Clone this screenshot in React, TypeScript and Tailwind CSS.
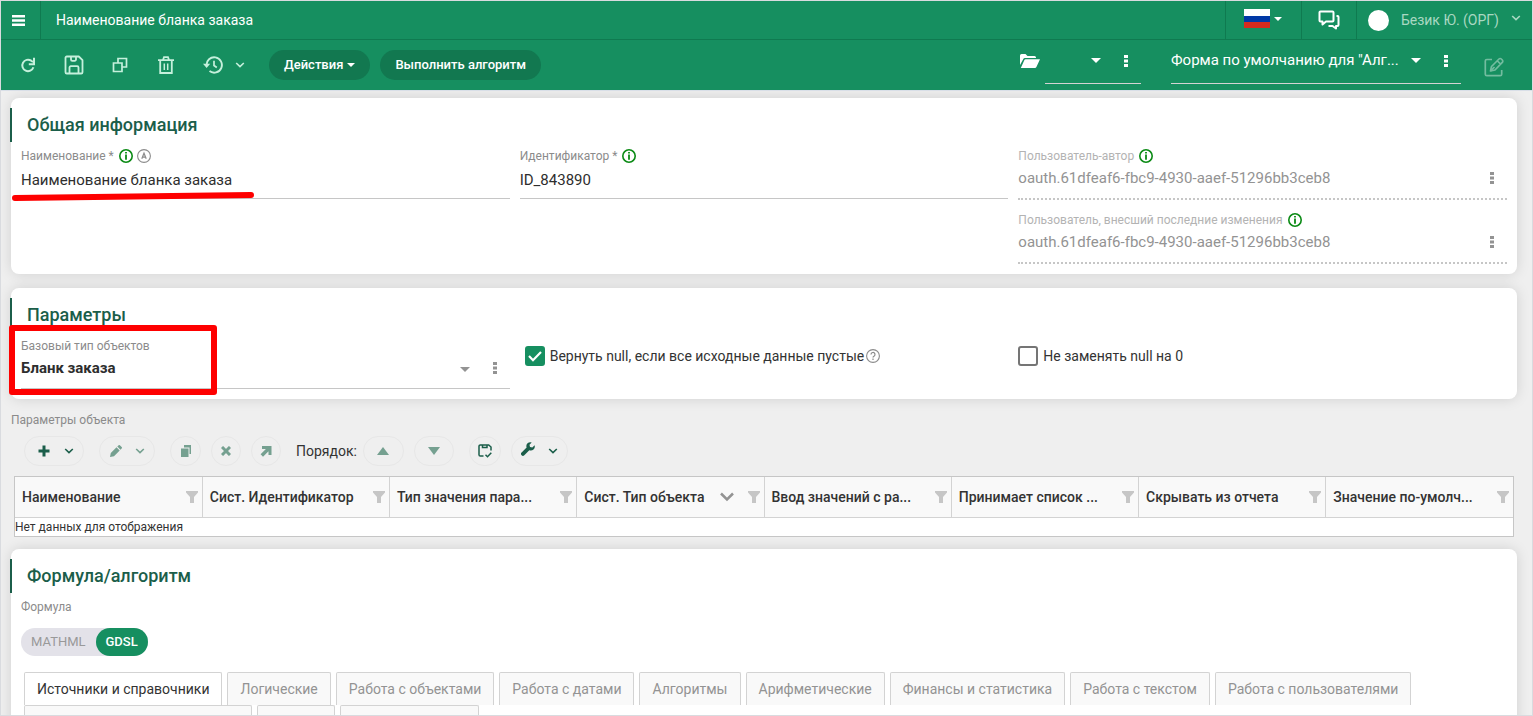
import { useState, type ReactNode } from "react";
import clsx from "clsx";

const columns = [
  { title: "Наименование" },
  { title: "Сист. Идентификатор" },
  { title: "Тип значения пара..." },
  { title: "Сист. Тип объекта", sorted: true },
  { title: "Ввод значений с ра..." },
  { title: "Принимает список ..." },
  { title: "Скрывать из отчета" },
  { title: "Значение по-умолч..." },
];

const tabs = [
  "Источники и справочники",
  "Логические",
  "Работа с объектами",
  "Работа с датами",
  "Алгоритмы",
  "Арифметические",
  "Финансы и статистика",
  "Работа с текстом",
  "Работа с пользователями",
];

function Caret({ className }: { className?: string }) {
  return (
    <svg viewBox="0 0 10 5" className={clsx("h-[5px] w-[10px] shrink-0", className)} fill="currentColor">
      <path d="M0 0h10L5 5z" />
    </svg>
  );
}

function Chevron({ className }: { className?: string }) {
  return (
    <svg viewBox="0 0 10 6" className={clsx("h-[6px] w-[10px] shrink-0", className)} fill="none" stroke="currentColor" strokeWidth="1.6">
      <path d="m1.2 1 3.8 3.6L8.8 1" />
    </svg>
  );
}

function Dots() {
  return (
    <svg viewBox="0 0 4 12" className="h-3 w-1 shrink-0" fill="currentColor">
      <path d="M0 0h4v3H0zM0 4.5h4v3H0zM0 9h4v3H0z" />
    </svg>
  );
}

function InfoIcon() {
  return (
    <svg viewBox="0 0 14 14" className="size-[14px] shrink-0 text-[#0a8a14]" fill="none" stroke="currentColor">
      <circle cx="7" cy="7" r="6.2" strokeWidth="1.6" />
      <path d="M7 3v1.6M7 5.6v5.2" strokeWidth="1.8" />
    </svg>
  );
}

function Card({ title, children }: { title: string; children: ReactNode }) {
  return (
    <section className="relative rounded-lg bg-white py-2.5 shadow-[0_0_14px_rgba(0,0,0,0.13)]">
      <h2 className="-ml-px flex h-[34px] items-center border-l-2 border-[#1b5e4a] pl-[15px] text-lg font-medium text-[#1b5e4a]">
        {title}
      </h2>
      <div className="px-2.5 pt-1">{children}</div>
    </section>
  );
}

type FieldProps = {
  id: string;
  label: string;
  value: string;
  required?: boolean;
  info?: boolean;
  auto?: boolean;
};

function Field({ id, label, value, required, info, auto }: FieldProps) {
  return (
    <div>
      <div className="flex h-5 items-center gap-1">
        <label htmlFor={id} className="mr-px text-xs text-[#8b8b8b]">
          {label}
          {required && " *"}
        </label>
        {info && <InfoIcon />}
        {auto && (
          <svg viewBox="0 0 14 14" className="size-[14px] text-[#8b8b8b]" fill="none" stroke="currentColor">
            <circle cx="7" cy="7" r="6.4" strokeWidth="1.1" />
            <path d="M4.800 9.800 7 4.200l2.200 5.600M5.500 8.200h3" strokeWidth="1.2" />
          </svg>
        )}
      </div>
      <input
        id={id}
        defaultValue={value}
        className="block h-[33px] w-full border-b border-[#c6c6c6] pb-1 text-[15px] text-[#2e2e2e] outline-none"
      />
    </div>
  );
}

function ReadonlyField({ id, label, value }: FieldProps) {
  return (
    <div>
      <div className="flex h-5 items-center gap-1">
        <label htmlFor={id} className="mr-px text-xs text-[#b3b3b3]">
          {label}
        </label>
        <InfoIcon />
      </div>
      <div className="flex h-[34px] items-center border-b-2 border-dotted border-[#c6c6c6] pr-[13px] pb-2">
        <input id={id} readOnly value={value} className="min-w-0 flex-1 text-[15px] text-[#939393] outline-none" />
        <button aria-label="Ещё" className="text-[#939393]">
          <Dots />
        </button>
      </div>
    </div>
  );
}

function ToolButton({ label, className, disabled, children }: { label: string; className?: string; disabled?: boolean; children: ReactNode }) {
  return (
    <button
      aria-label={label}
      disabled={disabled}
      className={clsx(
        "flex h-[30px] shrink-0 items-center justify-center rounded-full border border-[#e7e7e7]",
        disabled ? "text-[#75a090]" : "text-[#1b5e4a]",
        className,
      )}
    >
      {children}
    </button>
  );
}

function Header() {
  return (
    <header className="shrink-0 bg-[#168f60] text-white">
      <div className="flex h-[39px] items-stretch border-b border-[#0f7a50]">
        <button aria-label="Меню" className="flex w-10 items-center justify-center border-r border-[#0f7a50] pr-1">
          <svg viewBox="0 0 13 11" className="h-[11px] w-[13px]" fill="currentColor">
            <path d="M0 0h13v2.400H0zM0 4.300h13v2.400H0zM0 8.600h13V11H0z" />
          </svg>
        </button>
        <h1 className="flex flex-1 items-center pl-[15px] text-sm">Наименование бланка заказа</h1>
        <button aria-label="Язык" className="flex w-[76px] gap-1 border-l border-[#0f7a50] pt-2 pl-[18px]">
          <svg viewBox="0 0 26 19" className="h-[19px] w-[26px]">
            <path fill="#fff" d="M0 0h26v7H0z" />
            <path fill="#0039a6" d="M0 7h26v6H0z" />
            <path fill="#d52b1e" d="M0 13h26v6H0z" />
          </svg>
          <svg viewBox="0 0 8 4" className="mt-2 h-1 w-2" fill="currentColor">
            <path d="M0 0h8L4 4z" />
          </svg>
        </button>
        <button aria-label="Сообщения" className="flex w-[55px] items-center justify-center border-l border-[#0f7a50]">
          <svg viewBox="0 0 22 20" className="h-5 w-[22px]" fill="none" stroke="currentColor" strokeWidth="2" strokeLinejoin="round">
            <path d="M2.500 1.500h12a1 1 0 0 1 1 1v8a1 1 0 0 1-1 1H8L4.500 14.500v-3h-2a1 1 0 0 1-1-1v-8a1 1 0 0 1 1-1z" />
            <path d="M18.500 6h1a1 1 0 0 1 1 1v8a1 1 0 0 1-1 1h-1.500v2.500L14.500 16h-4" />
          </svg>
        </button>
        <button className="flex items-center border-l border-[#0f7a50] pr-[11px] pl-[11px] text-sm text-[#a9d8c2]">
          <span className="mr-3 size-[21px] rounded-full bg-white" />
          Безик Ю. (ОРГ)
          <Chevron className="mb-1 ml-3" />
        </button>
      </div>

      <div className="flex h-[50px] items-center pl-1 text-[#c5f0dc]">
        <button aria-label="Обновить" className="flex w-[46px] justify-center">
          <svg viewBox="0 0 16 16" className="size-4" fill="none" stroke="currentColor" strokeWidth="2">
            <path d="M13.400 10.200A5.700 5.700 0 1 1 11.200 3.700L13 5" />
            <path d="M14 .8v6.500H8.800" />
          </svg>
        </button>
        <button aria-label="Сохранить" className="flex w-[46px] justify-center">
          <svg viewBox="0 0 20 20" className="size-5" fill="none" stroke="currentColor" strokeWidth="1.800" strokeLinejoin="round">
            <path d="M2.800 1.500h12l3.700 3.700v12a1.300 1.300 0 0 1-1.300 1.300H2.800a1.300 1.300 0 0 1-1.300-1.300V2.800a1.300 1.300 0 0 1 1.300-1.300z" />
            <path d="M7 1.500v3a1.300 1.300 0 0 0 1.300 1.300h2.400A1.300 1.300 0 0 0 12 4.500v-3M5.500 18.500v-6a1.300 1.300 0 0 1 1.300-1.300h6.400a1.300 1.300 0 0 1 1.300 1.300v6" />
          </svg>
        </button>
        <button aria-label="Копировать" className="flex w-[46px] justify-center">
          <svg viewBox="0 0 16 16" className="size-4" fill="none" stroke="currentColor" strokeWidth="1.700">
            <path d="M1.500 6H10v8.500H1.500z" />
            <path d="M6 6V1.500h8.500V10H10" />
          </svg>
        </button>
        <button aria-label="Удалить" className="flex w-[46px] justify-center">
          <svg viewBox="0 0 16 18" className="h-[18px] w-4" fill="none" stroke="currentColor" strokeWidth="1.800">
            <path d="M0 4.200h16M5 4l1-2.800h4L11 4M2.200 4v13h11.600V4" />
            <path d="M6.300 7.500v6.500M9.700 7.500v6.500" strokeWidth="1.500" />
          </svg>
        </button>
        <button aria-label="История" className="flex w-[72px] items-center gap-3 pl-[14px]">
          <svg viewBox="0 0 20 18" className="h-[18px] w-5 shrink-0" fill="none" stroke="currentColor" strokeWidth="1.900">
            <path d="M3.500 9.500a7.700 7.700 0 1 1 3 5.600" />
            <path d="M11 4.800V9.500l2.800 2" strokeWidth="1.700" />
            <path d="M0 7.800h7.200L3.600 12z" fill="currentColor" stroke="none" />
          </svg>
          <Chevron />
        </button>
        <button className="ml-2 flex h-[30px] items-center gap-1 rounded-full bg-[#127850] px-[15px] text-[13px] font-medium text-white">
          Действия
          <svg viewBox="0 0 8 4" className="h-1 w-2" fill="currentColor">
            <path d="M0 0h8L4 4z" />
          </svg>
        </button>
        <button className="ml-2.5 h-[30px] rounded-full bg-[#127850] px-[15px] text-[13px] font-medium text-white">
          Выполнить алгоритм
        </button>

        <div className="ml-auto flex items-start text-white">
          <button aria-label="Открыть папку" className="mt-[7px]">
            <svg viewBox="0 0 20 14" className="h-[14px] w-5" fill="currentColor">
              <path d="M0 11V1.500A1.500 1.500 0 0 1 1.500 0h4L7.500 2h7A1.500 1.500 0 0 1 16 3.500V4H5a2 2 0 0 0-1.800 1.200z" />
              <path d="M.8 14 4.300 6.200A1.500 1.500 0 0 1 5.600 5.300H20L16.400 13a1.600 1.600 0 0 1-1.500 1z" />
            </svg>
          </button>
          <div className="relative ml-[5px] flex h-[37px] w-24 items-center border-b border-[#d3d3d3] pb-2">
            <select aria-label="Папка" className="h-6 w-full appearance-none outline-none">
              <option></option>
            </select>
            <Caret className="pointer-events-none absolute right-10" />
            <button aria-label="Ещё" className="absolute right-[13px]">
              <Dots />
            </button>
          </div>
          <div className="relative ml-[30px] flex h-[37px] w-[290px] items-center border-b border-[#d3d3d3] pb-2">
            <select aria-label="Форма" className="h-6 w-full appearance-none text-[15px] outline-none">
              <option>Форма по умолчанию для "Алг...</option>
            </select>
            <Caret className="pointer-events-none absolute right-10" />
            <button aria-label="Ещё" className="absolute right-[13px]">
              <Dots />
            </button>
          </div>
          <button aria-label="Редактировать форму" className="mt-2.5 mr-7 ml-[23px] text-[#73bc9f]">
            <svg viewBox="0 0 20 20" className="size-5" fill="none" stroke="currentColor" strokeWidth="1.700" strokeLinejoin="round">
              <path d="M8 2.500H2.800a1.500 1.500 0 0 0-1.500 1.500v13.200a1.500 1.500 0 0 0 1.500 1.500h13.400a1.500 1.500 0 0 0 1.500-1.500V13" />
              <path d="m6.500 14 1-4.500 7.500-7.500a1.600 1.600 0 0 1 2.300 0l1 1a1.600 1.600 0 0 1 0 2.300L11 13zM13.500 4l3 3" />
              <path d="m6.500 14 4-4" />
            </svg>
          </button>
        </div>
      </div>
    </header>
  );
}

function Toolbar() {
  return (
    <div className="mt-1.5 flex items-center pl-[13px]">
      <ToolButton label="Добавить" className="w-[60px] gap-[14px] pl-[3px]">
        <svg viewBox="0 0 12 12" className="size-3" fill="currentColor">
          <path d="M4.500.5h3v4h4v3h-4v4h-3v-4h-4v-3h4z" />
        </svg>
        <Chevron />
      </ToolButton>
      <ToolButton label="Изменить" disabled className="ml-[15px] w-14 gap-[13px]">
        <svg viewBox="0 0 12 12" className="size-3" fill="currentColor">
          <path d="m0 12 .8-4L6.500 2.300l3.200 3.200L4 11.200zM7.300 1.500 8.400.4a1.200 1.200 0 0 1 1.700 0l1.500 1.500a1.200 1.200 0 0 1 0 1.700l-1.100 1.100z" />
        </svg>
        <Chevron />
      </ToolButton>
      <ToolButton label="Дублировать" disabled className="ml-[15px] w-[31px]">
        <svg viewBox="0 0 12 12" className="size-3" fill="currentColor">
          <path d="M4 0h7v9H9.500V2.500H4zM1 3.500h7.500V12H1z" />
        </svg>
      </ToolButton>
      <ToolButton label="Удалить" disabled className="ml-2.5 w-[30px]">
        <svg viewBox="0 0 10 10" className="size-[10px]" fill="none" stroke="currentColor" strokeWidth="3">
          <path d="m1 1 8 8M9 1 1 9" />
        </svg>
      </ToolButton>
      <ToolButton label="Открыть" disabled className="ml-2.5 w-[30px]">
        <svg viewBox="0 0 12 12" className="size-3" fill="currentColor">
          <path d="M2 1h9.500v9H8.500V6.300L3 11.700.6 9.300 5.900 4H2z" />
        </svg>
      </ToolButton>
      <span className="mr-1.5 ml-[15px] text-sm text-[#333]">Порядок:</span>
      <ToolButton label="Выше" disabled className="w-[41px]">
        <svg viewBox="0 0 12 8" className="h-2 w-3" fill="currentColor">
          <path d="M0 8 6 0l6 8z" />
        </svg>
      </ToolButton>
      <ToolButton label="Ниже" disabled className="ml-2.5 w-10">
        <svg viewBox="0 0 12 8" className="h-2 w-3" fill="currentColor">
          <path d="M0 0h12L6 8z" />
        </svg>
      </ToolButton>
      <ToolButton label="Сохранить порядок" className="ml-[15px] w-8">
        <svg viewBox="0 0 14 14" className="size-[14px]" fill="none" stroke="currentColor" strokeWidth="1.500">
          <path d="M5.500 12H2.300A1.300 1.300 0 0 1 1 10.700V2.300A1.300 1.300 0 0 1 2.300 1h8.400L13 3v3.500" />
          <path d="M4.500 1v2.500h4.500V1M7.500 10.800l2 2 3.800-4" />
        </svg>
      </ToolButton>
      <ToolButton label="Настройки" className="ml-2.5 w-[57px] gap-[13px]">
        <svg viewBox="0 0 14 14" className="mb-1 size-[14px]" fill="currentColor">
          <path d="M13.600 3.300 11.300 5.500 9 5 8.500 2.700 10.700.4A4 4 0 0 0 5.600 5.500L.6 10.500a1.800 1.800 0 0 0 0 2.700 1.800 1.800 0 0 0 2.700 0l5-5a4 4 0 0 0 5.300-4.900z" />
        </svg>
        <Chevron />
      </ToolButton>
    </div>
  );
}

function CheckBox({ label, checked, onChange }: { label: string; checked: boolean; onChange: () => void }) {
  return (
    <label className="flex items-center gap-[5px] text-sm text-[#333]">
      <span className="relative size-5">
        <input
          type="checkbox"
          checked={checked}
          onChange={onChange}
          className="block size-5 appearance-none rounded-[3px] border-2 border-[#757575] checked:border-[#168f60] checked:bg-[#168f60]"
        />
        {checked && (
          <svg viewBox="0 0 20 20" className="pointer-events-none absolute inset-0 size-5" fill="none" stroke="#fff" strokeWidth="2.200">
            <path d="m4 10 4 4.200L16 6" />
          </svg>
        )}
      </span>
      {label}
    </label>
  );
}

export default function App() {
  const [returnNull, setReturnNull] = useState(true);
  const [keepNull, setKeepNull] = useState(false);
  const [mode, setMode] = useState("GDSL");
  const [tab, setTab] = useState(tabs[0]);

  return (
    <div className="flex h-screen flex-col overflow-hidden border border-[#d9dbdf] bg-[#efefef] font-['Roboto','Liberation_Sans',sans-serif]">
      <Header />
      <main className="min-h-0 flex-1 overflow-hidden border-t border-[#d9dfe8] pt-[7px] pr-[15px] pl-2.5">
        <Card title="Общая информация">
          <div className="grid grid-cols-3 gap-2.5">
            <div className="relative">
              <Field id="name" label="Наименование" value="Наименование бланка заказа" required info auto />
              <svg viewBox="0 0 244 12" className="pointer-events-none absolute top-[45px] -left-2.5 h-3 w-[244px]" fill="none">
                <path d="M4 7 240 4" stroke="#fe0000" strokeWidth="6" strokeLinecap="round" />
              </svg>
            </div>
            <Field id="ident" label="Идентификатор" value="ID_843890" required info />
            <div className="flex flex-col gap-2.5">
              <ReadonlyField id="author" label="Пользователь-автор" value="oauth.61dfeaf6-fbc9-4930-aaef-51296bb3ceb8" />
              <ReadonlyField id="editor" label="Пользователь, внесший последние изменения" value="oauth.61dfeaf6-fbc9-4930-aaef-51296bb3ceb8" />
            </div>
          </div>
        </Card>

        <div className="mt-[14px]">
          <Card title="Параметры">
            <div className="grid grid-cols-3 gap-2.5">
              <div className="relative">
                <label htmlFor="base" className="flex h-5 items-center text-xs text-[#8b8b8b]">
                  Базовый тип объектов
                </label>
                <div className="flex h-[33px] items-center border-b border-[#c6c6c6] pr-[13px] pb-2 text-[#939393]">
                  <select id="base" className="min-w-0 flex-1 appearance-none text-[15px] font-bold text-[#2e2e2e] outline-none">
                    <option>Бланк заказа</option>
                  </select>
                  <Caret className="pointer-events-none mt-0.5 mr-[23px]" />
                  <button aria-label="Ещё">
                    <Dots />
                  </button>
                </div>
                <div className="pointer-events-none absolute -top-[11px] -left-3 h-[70px] w-[208px] rounded-[3px] border-6 border-[#fe0000]" />
              </div>
              <div className="flex h-10 items-center pl-[5px]">
                <CheckBox label="Вернуть null, если все исходные данные пустые" checked={returnNull} onChange={() => setReturnNull(!returnNull)} />
                <svg viewBox="0 0 14 14" className="ml-0.5 size-[14px] text-[#8b8b8b]" fill="none" stroke="currentColor">
                  <circle cx="7" cy="7" r="6.400" strokeWidth="1.100" />
                  <path d="M5 5.500a2 2 0 1 1 3 1.700c-.7.400-1 .7-1 1.400M7 9.600v1.400" strokeWidth="1.200" />
                </svg>
              </div>
              <div className="flex h-10 items-center">
                <CheckBox label="Не заменять null на 0" checked={keepNull} onChange={() => setKeepNull(!keepNull)} />
              </div>
            </div>
          </Card>
        </div>

        <h3 className="mt-[11px] flex h-5 items-center text-xs text-[#8b8b8b]">Параметры объекта</h3>
        <Toolbar />

        <div className="mt-2.5 mr-[3px] mb-3 ml-[3px] border border-[#c6c6c6] bg-white">
          <table className="w-full table-fixed border-collapse text-left">
            <thead>
              <tr className="h-10 border-b border-[#d3d3d3] bg-[#f9f9f9]">
                {columns.map((col) => (
                  <th key={col.title} className="border-l border-[#d3d3d3] px-[7px] text-sm font-medium text-[#333] first:border-l-0">
                    <div className="flex items-center">
                      <span className="flex-1 whitespace-nowrap">{col.title}</span>
                      {col.sorted && (
                        <svg viewBox="0 0 14 10" className="mr-[14px] h-[10px] w-[14px] text-[#939393]" fill="none" stroke="currentColor" strokeWidth="2.500">
                          <path d="m1 1.500 6 6 6-6" />
                        </svg>
                      )}
                      <svg viewBox="0 0 12 12" className="-mr-[3px] size-3 shrink-0 text-[#c6c6c6]" fill="currentColor">
                        <path d="M0 0h12v1.500L8 6v6H4V6L0 1.500z" />
                      </svg>
                    </div>
                  </th>
                ))}
              </tr>
            </thead>
            <tbody>
              <tr>
                <td colSpan={8} className="h-[18px] text-xs leading-[18px] text-[#333]">
                  Нет данных для отображения
                </td>
              </tr>
            </tbody>
          </table>
        </div>

        <Card title="Формула/алгоритм">
          <div className="flex h-5 items-center text-xs text-[#8b8b8b]">Формула</div>
          <div className="mt-[11px] inline-flex h-7 items-center rounded-full bg-[#e3e2e9] text-[13px]">
            {["MATHML", "GDSL"].map((m) => (
              <button
                key={m}
                onClick={() => setMode(m)}
                className={clsx("h-7 rounded-full px-2.5", m === mode ? "bg-[#168f60] font-medium text-white" : "text-[#999]")}
              >
                {m}
              </button>
            ))}
          </div>
          <div className="mt-4 ml-[3px] flex gap-[5px] text-sm">
            {tabs.map((t) => (
              <button
                key={t}
                onClick={() => setTab(t)}
                className={clsx(
                  "h-[33px] rounded-t-[2px] border border-b-0 border-[#d3d3d3] px-3 whitespace-nowrap",
                  t === tab ? "bg-white text-[#333]" : "bg-[#f9f9f9] text-[#939393]",
                )}
              >
                {t}
              </button>
            ))}
          </div>
          <div className="ml-[3px] flex gap-[5px]">
            <div className="h-[33px] w-[228px] rounded-t-[2px] border border-b-0 border-[#d3d3d3] bg-[#f9f9f9]" />
            <div className="h-[33px] w-[78px] rounded-t-[2px] border border-b-0 border-[#d3d3d3] bg-[#f9f9f9]" />
            <div className="h-[33px] w-[139px] rounded-t-[2px] border border-b-0 border-[#d3d3d3] bg-[#f9f9f9]" />
          </div>
        </Card>
      </main>
    </div>
  );
}
